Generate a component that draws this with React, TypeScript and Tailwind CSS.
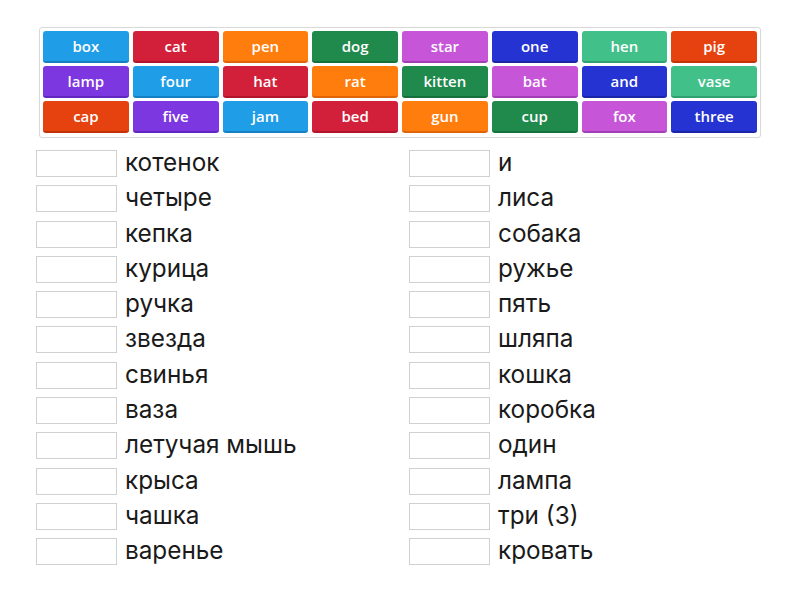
const BLUE = 'bg-[#1f9de6] border-[#1580c4]'
const RED = 'bg-[#d3203a] border-[#b0152c]'
const ORANGE = 'bg-[#ff7d0c] border-[#e0650a]'
const GREEN = 'bg-[#1f8a4c] border-[#16703c]'
const MAGENTA = 'bg-[#c655d8] border-[#a33fb6]'
const NAVY = 'bg-[#2533d2] border-[#1a25a8]'
const MINT = 'bg-[#42c08a] border-[#2fa06f]'
const VERMILION = 'bg-[#e6420f] border-[#c3330a]'
const PURPLE = 'bg-[#7c37e0] border-[#6226c0]'

const TILES: { word: string; color: string }[] = [
  { word: 'box', color: BLUE },
  { word: 'cat', color: RED },
  { word: 'pen', color: ORANGE },
  { word: 'dog', color: GREEN },
  { word: 'star', color: MAGENTA },
  { word: 'one', color: NAVY },
  { word: 'hen', color: MINT },
  { word: 'pig', color: VERMILION },
  { word: 'lamp', color: PURPLE },
  { word: 'four', color: BLUE },
  { word: 'hat', color: RED },
  { word: 'rat', color: ORANGE },
  { word: 'kitten', color: GREEN },
  { word: 'bat', color: MAGENTA },
  { word: 'and', color: NAVY },
  { word: 'vase', color: MINT },
  { word: 'cap', color: VERMILION },
  { word: 'five', color: PURPLE },
  { word: 'jam', color: BLUE },
  { word: 'bed', color: RED },
  { word: 'gun', color: ORANGE },
  { word: 'cup', color: GREEN },
  { word: 'fox', color: MAGENTA },
  { word: 'three', color: NAVY },
]

const LEFT = [
  'котенок',
  'четыре',
  'кепка',
  'курица',
  'ручка',
  'звезда',
  'свинья',
  'ваза',
  'летучая мышь',
  'крыса',
  'чашка',
  'варенье',
]

const RIGHT = [
  'и',
  'лиса',
  'собака',
  'ружье',
  'пять',
  'шляпа',
  'кошка',
  'коробка',
  'один',
  'лампа',
  'три (3)',
  'кровать',
]

function Column({ words }: { words: string[] }) {
  return (
    <div className="flex flex-col">
      {words.map((w) => (
        <div key={w} className="flex h-[35.3px] items-start gap-2">
          <div className="h-[27px] w-[81px] shrink-0 border border-[#d0d0d0] bg-white" />
          <div className="text-[24.3px] leading-[25px] text-[#1a1a1a]">{w}</div>
        </div>
      ))}
    </div>
  )
}

export default function App() {
  return (
    <div className="h-[600px] w-[800px] bg-white font-['Inter',sans-serif]">
      <div className="ml-[39px] pt-[27px]">
        <div className="grid w-[722px] grid-cols-8 gap-x-[4px] gap-y-[3px] rounded-[3px] border border-[#d8d8d8] px-[3px] pb-[4px] pt-[3px]">
          {TILES.map((t) => (
            <div
              key={t.word}
              className={
                'flex h-[32px] items-center justify-center rounded-[3px] border-b-2 pt-[1px] font-["Open_Sans",sans-serif] text-[15px] font-semibold text-white ' +
                t.color
              }
            >
              {t.word}
            </div>
          ))}
        </div>
      </div>

      <div className="mt-[12px] flex">
        <div className="ml-[36px] w-[373px]">
          <Column words={LEFT} />
        </div>
        <div>
          <Column words={RIGHT} />
        </div>
      </div>
    </div>
  )
}
